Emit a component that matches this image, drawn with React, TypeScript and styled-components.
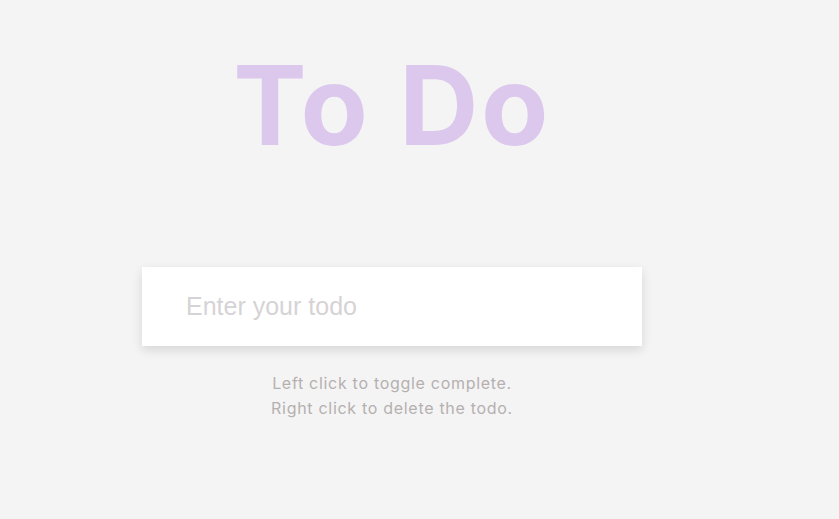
import React from 'react';
import styled, { createGlobalStyle } from 'styled-components';

const Global = createGlobalStyle`
  html, body {
    margin: 0;
    padding: 0;
    background: #f4f4f4;
  }
  body {
    font-family: Inter, 'Liberation Sans', sans-serif;
  }
`;

const Page = styled.main`
  width: 784px;
  min-height: 519px;
  display: flex;
  flex-direction: column;
  align-items: center;
`;

const Title = styled.h1`
  margin: 45px 0 0;
  font-family: Inter, 'Noto Sans', sans-serif;
  font-weight: 700;
  font-size: 110px;
  line-height: 120px;
  letter-spacing: 2.5px;
  color: #dcc8ed;
`;

const Form = styled.form`
  margin-top: 102px;
`;

const Input = styled.input`
  box-sizing: border-box;
  width: 500px;
  height: 79px;
  border: none;
  outline: none;
  background: #fff;
  padding: 0 44px;
  font-family: 'Liberation Sans', Arial, sans-serif;
  font-size: 25px;
  color: #555;
  box-shadow: 0 4px 10px rgba(0, 0, 0, 0.12);
  &::placeholder {
    color: #d6d3d6;
  }
`;

const Hint = styled.p`
  margin: 25px 0 0;
  text-align: center;
  font-family: Inter, 'Noto Sans', sans-serif;
  font-size: 16px;
  line-height: 25px;
  letter-spacing: 0.7px;
  color: #b5b0b0;
`;

const App = () => {
  return (
    <Page>
      <Global />
      <Title>To Do</Title>
      <Form onSubmit={e => e.preventDefault()}>
        <Input placeholder='Enter your todo' />
      </Form>
      <Hint>
        Left click to toggle complete.
        <br />
        Right click to delete the todo.
      </Hint>
    </Page>
  );
};

export default App;
